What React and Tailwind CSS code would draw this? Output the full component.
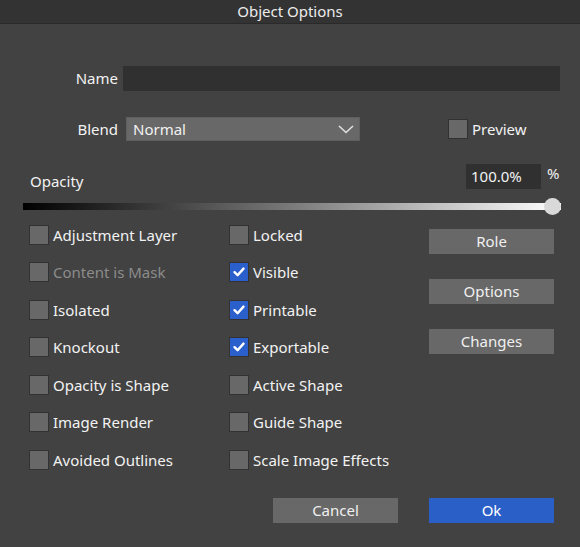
import React, { useState } from 'react';

const LEFT = [
  { label: 'Adjustment Layer' },
  { label: 'Content is Mask', disabled: true },
  { label: 'Isolated' },
  { label: 'Knockout' },
  { label: 'Opacity is Shape' },
  { label: 'Image Render' },
  { label: 'Avoided Outlines' },
];

const MIDDLE = [
  { label: 'Locked' },
  { label: 'Visible', checked: true },
  { label: 'Printable', checked: true },
  { label: 'Exportable', checked: true },
  { label: 'Active Shape' },
  { label: 'Guide Shape' },
  { label: 'Scale Image Effects' },
];

function Box({ checked }) {
  return (
    <div
      className={
        'w-[20px] h-[20px] shrink-0 border border-[#323232] flex items-center justify-center ' +
        (checked ? 'bg-[#2b5fcb]' : 'bg-[#686868]')
      }
    >
      {checked && (
        <svg width="14" height="14" viewBox="0 0 14 14">
          <path d="M2.5 7.2 L5.6 10.2 L11.5 3.6" fill="none" stroke="#fff" strokeWidth="2.4" strokeLinecap="round" strokeLinejoin="round" />
        </svg>
      )}
    </div>
  );
}

function Check({ label, checked, disabled }) {
  return (
    <div className="h-[37.5px] flex items-center gap-[4px]">
      <Box checked={checked} />
      <span className={disabled ? 'text-[#8c8c8c]' : 'text-[#f2f2f2]'}>{label}</span>
    </div>
  );
}

function Btn({ children, primary, className = '' }) {
  return (
    <button
      type="button"
      className={
        'w-[125px] h-[25px] flex items-center justify-center text-[15px] leading-none ' +
        (primary ? 'bg-[#2b5fc8] text-white ' : 'bg-[#686868] text-[#f0f0f0] ') +
        className
      }
    >
      {children}
    </button>
  );
}

export default function App() {
  const [name, setName] = useState('');

  return (
    <div
      className="w-[580px] h-[547px] bg-[#424242] text-[15px] text-[#f2f2f2] overflow-hidden"
      style={{ fontFamily: '"Noto Sans", "Open Sans", sans-serif' }}
    >
      {/* Title bar */}
      <div className="h-[24px] bg-[#333333] border-b border-[#2a2a2a] flex items-center justify-center text-[15px] text-[#ececec] leading-none">
        Object Options
      </div>

      {/* Name */}
      <div className="flex items-center mt-[42px] h-[25px]">
        <div className="w-[118px] text-right">Name</div>
        <input
          value={name}
          onChange={e => setName(e.target.value)}
          className="ml-[5px] w-[437px] h-[25px] bg-[#303030] outline-none px-2 text-[#f2f2f2]"
        />
      </div>

      {/* Blend + Preview */}
      <div className="flex items-center mt-[26px] h-[24px]">
        <div className="w-[118px] text-right">Blend</div>
        <div className="ml-[8px] w-[234px] h-[24px] bg-[#686868] border border-[#5e5e5e] flex items-center justify-between pl-[6px] pr-[4px]">
          <span>Normal</span>
          <svg width="18" height="12" viewBox="0 0 18 12">
            <path d="M2 3 L9 9.5 L16 3" fill="none" stroke="#e0e0e0" strokeWidth="1.6" />
          </svg>
        </div>
        <div className="ml-[88px] flex items-center gap-[4px]">
          <Box />
          <span>Preview</span>
        </div>
      </div>

      {/* Opacity */}
      <div className="flex items-end mt-[23px] h-[25px]">
        <div className="ml-[30px] flex-1 leading-none">Opacity</div>
        <div className="w-[75px] h-[25px] bg-[#303030] flex items-center pl-[5px] text-[#f2f2f2]">100.0%</div>
        <div className="w-[39px] self-start pl-[6px] leading-none pt-[2px]">%</div>
      </div>

      {/* Slider */}
      <div className="relative mt-[14px] ml-[23px] w-[538px] h-[7px]">
        <div
          className="h-[7px] w-full"
          style={{ background: 'linear-gradient(to right, #000 0%, #7a7a7a 50%, #fff 100%)' }}
        />
        <div className="absolute right-0 top-[-5px] w-[17px] h-[17px] rounded-full bg-[#d9d9d9]" />
      </div>

      {/* Checkbox grid */}
      <div className="flex mt-[6px]">
        <div className="ml-[29px] w-[200px] flex flex-col">
          {LEFT.map(c => <Check key={c.label} {...c} />)}
        </div>
        <div className="w-[200px] flex flex-col">
          {MIDDLE.map(c => <Check key={c.label} {...c} />)}
        </div>
        <div className="flex flex-col gap-[25px] pt-[13px]">
          <Btn>Role</Btn>
          <Btn>Options</Btn>
          <Btn>Changes</Btn>
        </div>
      </div>

      {/* Footer */}
      <div className="flex mt-[19px] ml-[273px] gap-[31px]">
        <Btn>Cancel</Btn>
        <Btn primary>Ok</Btn>
      </div>
    </div>
  );
}
